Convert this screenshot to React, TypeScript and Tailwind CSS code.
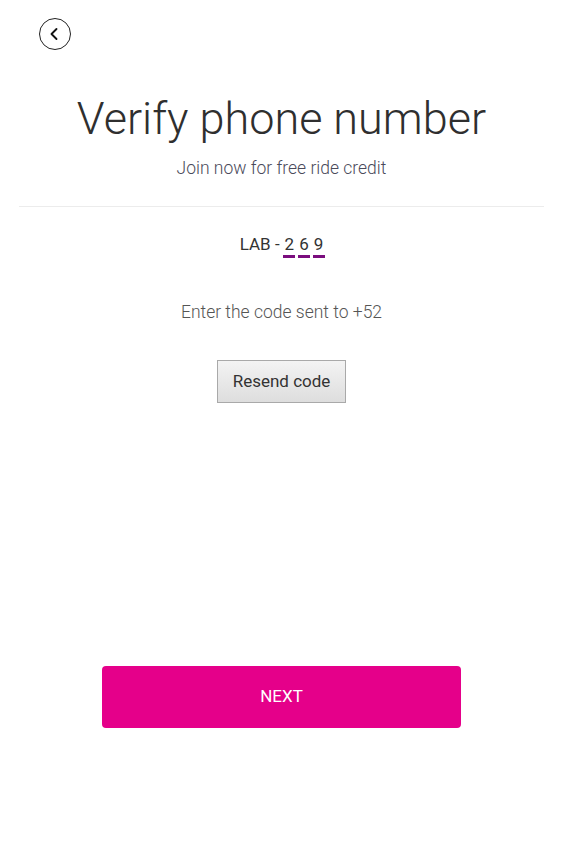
import { ChevronLeft } from 'lucide-react'

function CodeDigit({ d }: { d: string }) {
  return (
    <span className="relative ml-[5px] inline-block">
      {d}
      <span className="absolute left-1/2 top-[23px] h-[3px] w-[12px] -translate-x-1/2 bg-[#7b0d7e]" />
    </span>
  )
}

export default function App() {
  return (
    <div className="flex h-[858px] w-[563px] flex-col bg-white font-['Roboto',sans-serif] text-[#333]">
      <div className="px-[39px] pt-[18px]">
        <button className="flex h-[32px] w-[32px] items-center justify-center rounded-full border border-[#222]">
          <ChevronLeft className="h-[20px] w-[20px] -translate-x-[1px]" strokeWidth={2.25} color="#111" />
        </button>
      </div>

      <h1 className="mt-[42px] text-center text-[45px] font-light leading-[54px] text-[#2f2f2f]">
        Verify phone number
      </h1>
      <p className="mt-[9px] text-center text-[17.5px] font-light text-[#4a4a5a]">
        Join now for free ride credit
      </p>

      <div className="mx-[19px] mt-[25px] h-px bg-[#ececec]" />

      <div className="mt-[25px] text-center text-[17px] text-[#333]">
        LAB -
        <CodeDigit d="2" />
        <CodeDigit d="6" />
        <CodeDigit d="9" />
      </div>

      <p className="mt-[41px] text-center text-[17.5px] font-light text-[#555]">
        Enter the code sent to +52
      </p>

      <div className="mt-[35px] flex justify-center">
        <button className="h-[43px] w-[129px] border border-[#a9a9a9] bg-gradient-to-b from-[#f3f3f3] to-[#dedede] text-[17px] text-[#333]">
          Resend code
        </button>
      </div>

      <div className="mt-[263px] flex justify-center">
        <button className="h-[62px] w-[359px] rounded-[4px] bg-[#e5008a] text-[17px] text-white">
          NEXT
        </button>
      </div>
    </div>
  )
}
